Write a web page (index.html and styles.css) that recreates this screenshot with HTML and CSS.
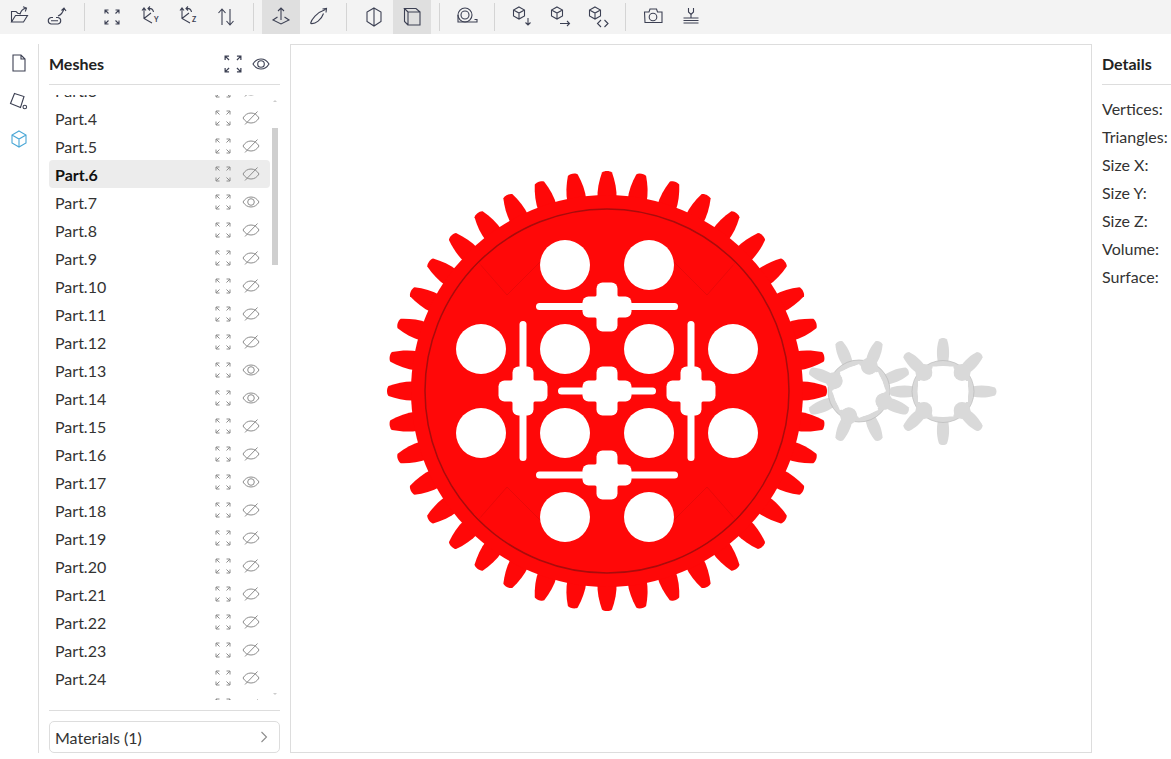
FILE: index.html
```html
<!DOCTYPE html>
<html lang="en">
<head>
    <meta charset="UTF-8">
    <title>Meshes</title>
    <link rel="stylesheet" href="styles.css">
</head>
<body>

<!-- shared icons -->
<svg class="defs" width="0" height="0">
    <symbol id="i-fit" viewBox="0 0 16 16">
        <path d="M1 4.5V1h3.5M1 1l3.5 3.5M11.5 1H15v3.5M15 1l-3.5 3.5M1 11.5V15h3.5M1 15l3.5-3.5M15 11.5V15h-3.5M15 15l-3.5-3.5"/>
    </symbol>
    <symbol id="i-eye" viewBox="0 0 18 14">
        <path d="M1 7c2-3.4 4.800-5 8-5s6 1.600 8 5c-2 3.400-4.800 5-8 5S3 10.400 1 7z"/>
        <circle cx="9" cy="7" r="3.300"/>
    </symbol>
    <symbol id="i-off" viewBox="0 0 18 14">
        <path d="M1 7c2-3.400 4.800-5 8-5s6 1.600 8 5c-2 3.400-4.800 5-8 5S3 10.400 1 7zM3 13.500L15.500 .5"/>
    </symbol>
</svg>

<div class="app">

    <div class="toolbar">
        <button class="tool"><svg viewBox="0 0 24 24"><path d="M4.500 17V6.500H9l2 2h2M4.500 17h12l4-6.500H8.500zM13 9.500c.5-3 2.500-5.500 6-6.500M16 1.800l3.500 1.200-1.200 3.500"/></svg></button>
        <button class="tool"><svg viewBox="0 0 24 24"><path d="M8 12.500H6a3.300 3.300 0 0 0 0 6.500h7a3.300 3.300 0 0 0 0-6.500h-2M6 15.800h7M13 11c2.500-1 5-3.500 6-7.500M16.500 5.500l2.500-2.500 2 3"/></svg></button>
        <span class="sep"></span>
        <button class="tool"><svg class="fit" viewBox="0 0 16 16"><use href="#i-fit"/></svg></button>
        <button class="tool"><svg viewBox="0 0 24 24"><path d="M6 3v10.500l8 4.500M4 5.500L6 3l2 2.500M6 13.500L13 8M10 3.500c3-.5 5 1 5.500 3.500M12 1.500L10 3.500l2 2"/><text x="16" y="17" class="axis">Y</text></svg></button>
        <button class="tool"><svg viewBox="0 0 24 24"><path d="M6 3v10.500l8 4.500M4 5.500L6 3l2 2.500M6 13.500L13 8M10 3.500c3-.5 5 1 5.500 3.500M12 1.500L10 3.500l2 2"/><text x="16" y="17" class="axis">Z</text></svg></button>
        <button class="tool"><svg viewBox="0 0 24 24"><path d="M8 20V4M4.500 8L8 4l3.500 4M16 4v16M12.500 16l3.500 4 3.500-4"/></svg></button>
        <span class="sep"></span>
        <button class="tool active"><svg viewBox="0 0 24 24"><path d="M8.500 12L4 15l8 4 8-4-4.500-3M12 3v12M9 6l3-3 3 3"/></svg></button>
        <button class="tool"><svg viewBox="0 0 24 24"><path d="M3.500 18.500c1-4 6-11 15-14M3.500 18.500c5 1 11-4 13-10M15.500 4l4-.5-.5 4"/></svg></button>
        <span class="sep"></span>
        <button class="tool"><svg viewBox="0 0 24 24"><path d="M12 3l7 4v9.500L12 21l-7-4.500V7zM12 3v18"/></svg></button>
        <button class="tool active"><svg viewBox="0 0 24 24"><path d="M8 7h12v13H8zM8 7L4.500 3.500H16L20 7M4.500 3.500V16.500L8 20"/></svg></button>
        <span class="sep"></span>
        <button class="tool"><svg viewBox="0 0 24 24"><circle cx="10" cy="10" r="7"/><circle cx="10" cy="10" r="4"/><path d="M10 17h12v-2.500h-2.500M3 10v7h7"/></svg></button>
        <span class="sep"></span>
        <button class="tool"><svg viewBox="0 0 24 24"><path d="M9 2l5.500 3v6L9 14l-5.500-3V5zM3.500 5L9 8l5.500-3M9 8v6M18 13v7M15.500 17.500L18 20l2.500-2.500"/></svg></button>
        <button class="tool"><svg viewBox="0 0 24 24"><path d="M9 2l5.500 3v6L9 14l-5.500-3V5zM3.500 5L9 8l5.500-3M9 8v6M12 18.500h9.500M19 16l2.500 2.500L19 21"/></svg></button>
        <button class="tool"><svg viewBox="0 0 24 24"><path d="M9 2l5.500 3v6L9 14l-5.500-3V5zM3.500 5L9 8l5.500-3M9 8v6M15 15l-3.500 3.500L15 22M18.500 15l3.500 3.500-3.500 3.500"/></svg></button>
        <span class="sep"></span>
        <button class="tool"><svg viewBox="0 0 24 24"><path d="M3.500 7h4.500l1-3h6.500l1 3h4.500v10.500h-17z"/><circle cx="12" cy="12" r="3.800"/></svg></button>
        <button class="tool"><svg viewBox="0 0 24 24"><path d="M4.500 13h15M4.500 15.500h15M4.500 18h15M12 13V9.500M9.500 3v4l2.500 2.500L14.500 7V3"/></svg></button>
    </div>

    <div class="main">

        <div class="sidebar">
            <button class="side-btn"><svg viewBox="0 0 24 24"><path d="M6 4h8l4 4v12H6zM14 4v4h4"/></svg></button>
            <button class="side-btn"><svg viewBox="0 0 24 24"><path d="M7.500 4.500l9.500 3-3.500 11-10-4zM16 18a1.800 1.800 0 1 0 3.600 0 1.800 1.800 0 0 0-3.600 0z"/></svg></button>
            <button class="side-btn blue"><svg viewBox="0 0 24 24"><path d="M12 4l7 4v8l-7 4-7-4V8zM5 8l7 4 7-4M12 12v8"/></svg></button>
        </div>

        <div class="meshes">
            <div class="panel-head">
                <span class="panel-title">Meshes</span>
                <svg class="head-fit"><use href="#i-fit"/></svg>
                <svg class="head-eye"><use href="#i-eye"/></svg>
            </div>

            <div class="list-wrap">
                <div class="list">
                    <div class="row"><span>Part.3</span><svg class="fit"><use href="#i-fit"/></svg><svg class="eye"><use href="#i-off"/></svg></div>
                    <div class="row"><span>Part.4</span><svg class="fit"><use href="#i-fit"/></svg><svg class="eye"><use href="#i-off"/></svg></div>
                    <div class="row"><span>Part.5</span><svg class="fit"><use href="#i-fit"/></svg><svg class="eye"><use href="#i-off"/></svg></div>
                    <div class="row selected"><span>Part.6</span><svg class="fit"><use href="#i-fit"/></svg><svg class="eye"><use href="#i-off"/></svg></div>
                    <div class="row"><span>Part.7</span><svg class="fit"><use href="#i-fit"/></svg><svg class="eye"><use href="#i-eye"/></svg></div>
                    <div class="row"><span>Part.8</span><svg class="fit"><use href="#i-fit"/></svg><svg class="eye"><use href="#i-off"/></svg></div>
                    <div class="row"><span>Part.9</span><svg class="fit"><use href="#i-fit"/></svg><svg class="eye"><use href="#i-off"/></svg></div>
                    <div class="row"><span>Part.10</span><svg class="fit"><use href="#i-fit"/></svg><svg class="eye"><use href="#i-off"/></svg></div>
                    <div class="row"><span>Part.11</span><svg class="fit"><use href="#i-fit"/></svg><svg class="eye"><use href="#i-off"/></svg></div>
                    <div class="row"><span>Part.12</span><svg class="fit"><use href="#i-fit"/></svg><svg class="eye"><use href="#i-off"/></svg></div>
                    <div class="row"><span>Part.13</span><svg class="fit"><use href="#i-fit"/></svg><svg class="eye"><use href="#i-eye"/></svg></div>
                    <div class="row"><span>Part.14</span><svg class="fit"><use href="#i-fit"/></svg><svg class="eye"><use href="#i-eye"/></svg></div>
                    <div class="row"><span>Part.15</span><svg class="fit"><use href="#i-fit"/></svg><svg class="eye"><use href="#i-off"/></svg></div>
                    <div class="row"><span>Part.16</span><svg class="fit"><use href="#i-fit"/></svg><svg class="eye"><use href="#i-off"/></svg></div>
                    <div class="row"><span>Part.17</span><svg class="fit"><use href="#i-fit"/></svg><svg class="eye"><use href="#i-eye"/></svg></div>
                    <div class="row"><span>Part.18</span><svg class="fit"><use href="#i-fit"/></svg><svg class="eye"><use href="#i-off"/></svg></div>
                    <div class="row"><span>Part.19</span><svg class="fit"><use href="#i-fit"/></svg><svg class="eye"><use href="#i-off"/></svg></div>
                    <div class="row"><span>Part.20</span><svg class="fit"><use href="#i-fit"/></svg><svg class="eye"><use href="#i-off"/></svg></div>
                    <div class="row"><span>Part.21</span><svg class="fit"><use href="#i-fit"/></svg><svg class="eye"><use href="#i-off"/></svg></div>
                    <div class="row"><span>Part.22</span><svg class="fit"><use href="#i-fit"/></svg><svg class="eye"><use href="#i-off"/></svg></div>
                    <div class="row"><span>Part.23</span><svg class="fit"><use href="#i-fit"/></svg><svg class="eye"><use href="#i-off"/></svg></div>
                    <div class="row"><span>Part.24</span><svg class="fit"><use href="#i-fit"/></svg><svg class="eye"><use href="#i-off"/></svg></div>
                    <div class="row"><span>Part.25</span><svg class="fit"><use href="#i-fit"/></svg><svg class="eye"><use href="#i-off"/></svg></div>
                </div>
                <!-- scrollbar -->
                <span class="arrow-up"></span>
                <span class="thumb"></span>
                <span class="arrow-down"></span>
            </div>

            <div class="panel-foot">
                <button class="materials">
                    <span>Materials (1)</span>
                    <svg viewBox="0 0 10 14"><path d="M2.500 2l5 5-5 5"/></svg>
                </button>
            </div>
        </div>

        <div class="canvas">
            <!-- viewBox uses page coordinates -->
            <svg class="scene" viewBox="291 45 800 707">
                <defs>
                    <path id="tooth" d="M-9.500-192C-10-201-8-210-5-218.500-3-220.500 3-220.500 5-218.500 8-210 10-201 9.500-192z"/>
                    <g id="teeth5">
                        <use href="#tooth"/>
                        <use href="#tooth" transform="rotate(9)"/>
                        <use href="#tooth" transform="rotate(18)"/>
                        <use href="#tooth" transform="rotate(27)"/>
                        <use href="#tooth" transform="rotate(36)"/>
                    </g>
                    <g id="cross">
                        <rect x="-10.500" y="-24.500" width="21" height="49" rx="6"/>
                        <rect x="-24.500" y="-10.500" width="49" height="21" rx="6"/>
                        <circle r="15.500"/>
                    </g>
                    <path id="small-tooth" d="M-5-29C-7-38-6-46-4-52-2-54 2-54 4-52 6-46 7-38 5-29z"/>
                    <g id="small-gear">
                        <use href="#small-tooth"/>
                        <use href="#small-tooth" transform="rotate(45)"/>
                        <use href="#small-tooth" transform="rotate(90)"/>
                        <use href="#small-tooth" transform="rotate(135)"/>
                        <use href="#small-tooth" transform="rotate(180)"/>
                        <use href="#small-tooth" transform="rotate(225)"/>
                        <use href="#small-tooth" transform="rotate(270)"/>
                        <use href="#small-tooth" transform="rotate(315)"/>
                        <circle r="31" class="ring"/>
                        <circle r="25.500" class="hole"/>
                        <circle cx="-19" cy="-19" r="8.500"/>
                        <circle cx="19" cy="-19" r="8.500"/>
                        <circle cx="-19" cy="19" r="8.500"/>
                        <circle cx="19" cy="19" r="8.500"/>
                        <rect x="-10.500" y="-25" width="21" height="50" class="hole"/>
                        <rect x="-25" y="-10.500" width="50" height="21" class="hole"/>
                    </g>
                </defs>

                <!-- big gear -->
                <g class="gear-red" transform="translate(607 391)">
                    <use href="#teeth5"/>
                    <use href="#teeth5" transform="rotate(45)"/>
                    <use href="#teeth5" transform="rotate(90)"/>
                    <use href="#teeth5" transform="rotate(135)"/>
                    <use href="#teeth5" transform="rotate(180)"/>
                    <use href="#teeth5" transform="rotate(225)"/>
                    <use href="#teeth5" transform="rotate(270)"/>
                    <use href="#teeth5" transform="rotate(315)"/>
                    <circle r="196"/>
                    <circle r="182" class="rim"/>
                    <path class="seam" d="M-128-128L-100-96-64-132M128-128L100-96 64-132M-128 128L-100 96-64 132M128 128L100 96 64 132"/>
                    <path class="rim-gap" d="M-127-127l-5 5M127-127l5 5M-127 127l-5-5M127 127l5-5"/>
                    <g class="holes">
                        <circle cx="-42" cy="-126" r="25"/><circle cx="42" cy="-126" r="25"/>
                        <circle cx="-126" cy="-42" r="25"/><circle cx="-42" cy="-42" r="25"/>
                        <circle cx="42" cy="-42" r="25"/><circle cx="126" cy="-42" r="25"/>
                        <circle cx="-126" cy="42" r="25"/><circle cx="-42" cy="42" r="25"/>
                        <circle cx="42" cy="42" r="25"/><circle cx="126" cy="42" r="25"/>
                        <circle cx="-42" cy="126" r="25"/><circle cx="42" cy="126" r="25"/>
                        <use href="#cross" x="0" y="-84"/>
                        <use href="#cross" x="-84" y="0"/>
                        <use href="#cross" x="84" y="0"/>
                        <use href="#cross" x="0" y="0"/>
                        <use href="#cross" x="0" y="84"/>
                        <rect x="-71" y="-88" width="142" height="7" rx="3.500"/>
                        <rect x="-71" y="80.500" width="142" height="7" rx="3.500"/>
                        <rect x="-49" y="-3.500" width="98" height="7" rx="3.500"/>
                        <rect x="-87.500" y="-70" width="7" height="140" rx="3.500"/>
                        <rect x="80.500" y="-70" width="7" height="140" rx="3.500"/>
                    </g>
                </g>

                <!-- small gears -->
                <g class="gear-grey">
                    <use href="#small-gear" transform="translate(859 391) rotate(-22.500)"/>
                    <use href="#small-gear" transform="translate(943 391.500)"/>
                </g>
            </svg>
        </div>

        <div class="details">
            <div class="panel-head">
                <span class="panel-title">Details</span>
            </div>
            <div class="detail-rows">
                <div class="detail">Vertices:</div>
                <div class="detail">Triangles:</div>
                <div class="detail">Size X:</div>
                <div class="detail">Size Y:</div>
                <div class="detail">Size Z:</div>
                <div class="detail">Volume:</div>
                <div class="detail">Surface:</div>
            </div>
        </div>

    </div>
</div>

</body>
</html>
```

FILE: styles.css
```css
* {
    box-sizing: border-box;
}

html, body {
    margin: 0;
    height: 100%;
    overflow: hidden;
}

body {
    font-family: "Lato", "Open Sans", sans-serif;
    font-size: 16px;
    color: #333;
    background: #fff;
}

button {
    font: inherit;
    color: inherit;
    border: 0;
    padding: 0;
    background: none;
}

svg {
    display: block;
    fill: none;
}

.defs {
    position: absolute;
}

.app {
    display: flex;
    flex-direction: column;
    height: 100%;
    padding-bottom: 6px;
}

/* toolbar */
.toolbar {
    display: flex;
    align-items: center;
    flex: none;
    height: 34px;
    background: #f3f3f3;
}

.tool {
    display: flex;
    align-items: center;
    justify-content: center;
    width: 38px;
    height: 34px;
}

.tool svg {
    width: 24px;
    height: 24px;
    stroke: #3c4053;
    stroke-width: 1.1;
}

.tool svg.fit {
    width: 16px;
    height: 16px;
}

.tool.active {
    background: #dfdfdf;
}

.axis {
    font-size: 7px;
    font-weight: 700;
    fill: #3c4053;
    stroke: none;
}

.sep {
    width: 1px;
    height: 28px;
    margin: 0 8px;
    background: #d4d4d4;
}

/* main area */
.main {
    display: flex;
    flex: 1;
    min-height: 0;
    margin-top: 10px;
}

.sidebar {
    flex: none;
    width: 39px;
    border-right: 1px solid #ddd;
}

.side-btn {
    display: flex;
    align-items: center;
    justify-content: center;
    width: 38px;
    height: 38px;
}

.side-btn svg {
    width: 24px;
    height: 24px;
    stroke: #3c4053;
    stroke-width: 1.1;
}

.side-btn.blue svg {
    stroke: #4aa7d6;
}

/* meshes panel */
.meshes {
    display: flex;
    flex-direction: column;
    flex: none;
    width: 251px;
    padding: 0 10px;
}

.panel-head {
    display: flex;
    align-items: center;
    flex: none;
    height: 41px;
    padding-bottom: 1px;
    border-bottom: 1px solid #ddd;
}

.panel-title {
    flex: 1;
    font-weight: 700;
    color: #222;
}

.head-fit {
    width: 18px;
    height: 18px;
    margin-right: 10px;
    stroke: #3c4053;
    stroke-width: 1.100;
}

.head-eye {
    width: 18px;
    height: 14px;
    margin-right: 10px;
    stroke: #3c4053;
    stroke-width: 1.100;
}

.list-wrap {
    position: relative;
    flex: 1;
    min-height: 0;
    margin-top: 10px;
    overflow: hidden;
}

.list {
    width: 221px;
    margin-top: -19px;
}

.row {
    display: flex;
    align-items: center;
    height: 28px;
    padding: 0 10px 0 6px;
    border-radius: 4px;
}

.row span {
    flex: 1;
}

.row .fit {
    width: 16px;
    height: 16px;
    stroke: #8c8c8c;
    stroke-width: 1;
}

.row .eye {
    width: 18px;
    height: 14px;
    margin-left: 11px;
    stroke: #8c8c8c;
    stroke-width: 1;
}

.row.selected {
    background: #ececec;
    font-weight: 700;
    color: #111;
}

.thumb {
    position: absolute;
    left: 223px;
    top: 33px;
    width: 6px;
    height: 137px;
    background: #cfcfcf;
}

.arrow-up, .arrow-down {
    position: absolute;
    left: 224px;
    border-left: 2px solid transparent;
    border-right: 2px solid transparent;
}

.arrow-up {
    top: 5px;
    border-bottom: 2px solid #ccc;
}

.arrow-down {
    bottom: 5px;
    border-top: 2px solid #ccc;
}

.panel-foot {
    flex: none;
    margin-top: 10px;
    padding-top: 10px;
    border-top: 1px solid #ddd;
}

.materials {
    display: flex;
    align-items: center;
    justify-content: space-between;
    width: 100%;
    height: 32px;
    padding: 0 10px 0 5px;
    border: 1px solid #ddd;
    border-radius: 5px;
}

.materials svg {
    width: 10px;
    height: 14px;
    stroke: #8c8c8c;
    stroke-width: 1.100;
}

/* 3d view */
.canvas {
    flex: none;
    width: 802px;
    border: 1px solid #ddd;
}

.scene {
    width: 800px;
    height: 100%;
}

.gear-red {
    fill: #ff0808;
}

.rim {
    stroke: #a80c0c;
    stroke-width: 1.500;
}

.rim-gap {
    stroke: #ff0808;
    stroke-width: 3;
}

.seam {
    stroke: #e40909;
    stroke-width: .8;
    fill: none;
}

.holes {
    fill: #fff;
}

.gear-grey {
    fill: #d9d9d9;
    stroke: none;
}

.ring {
    stroke: #b5b5b5;
    stroke-width: .6;
}

.hole {
    fill: #fff;
}

/* details panel */
.details {
    flex: 1;
    min-width: 0;
    padding-left: 10px;
    overflow: hidden;
}

.details .panel-head {
    width: 100px;
}

.detail-rows {
    padding-top: 10px;
}

.detail {
    height: 28px;
    line-height: 28px;
    white-space: nowrap;
}
```
